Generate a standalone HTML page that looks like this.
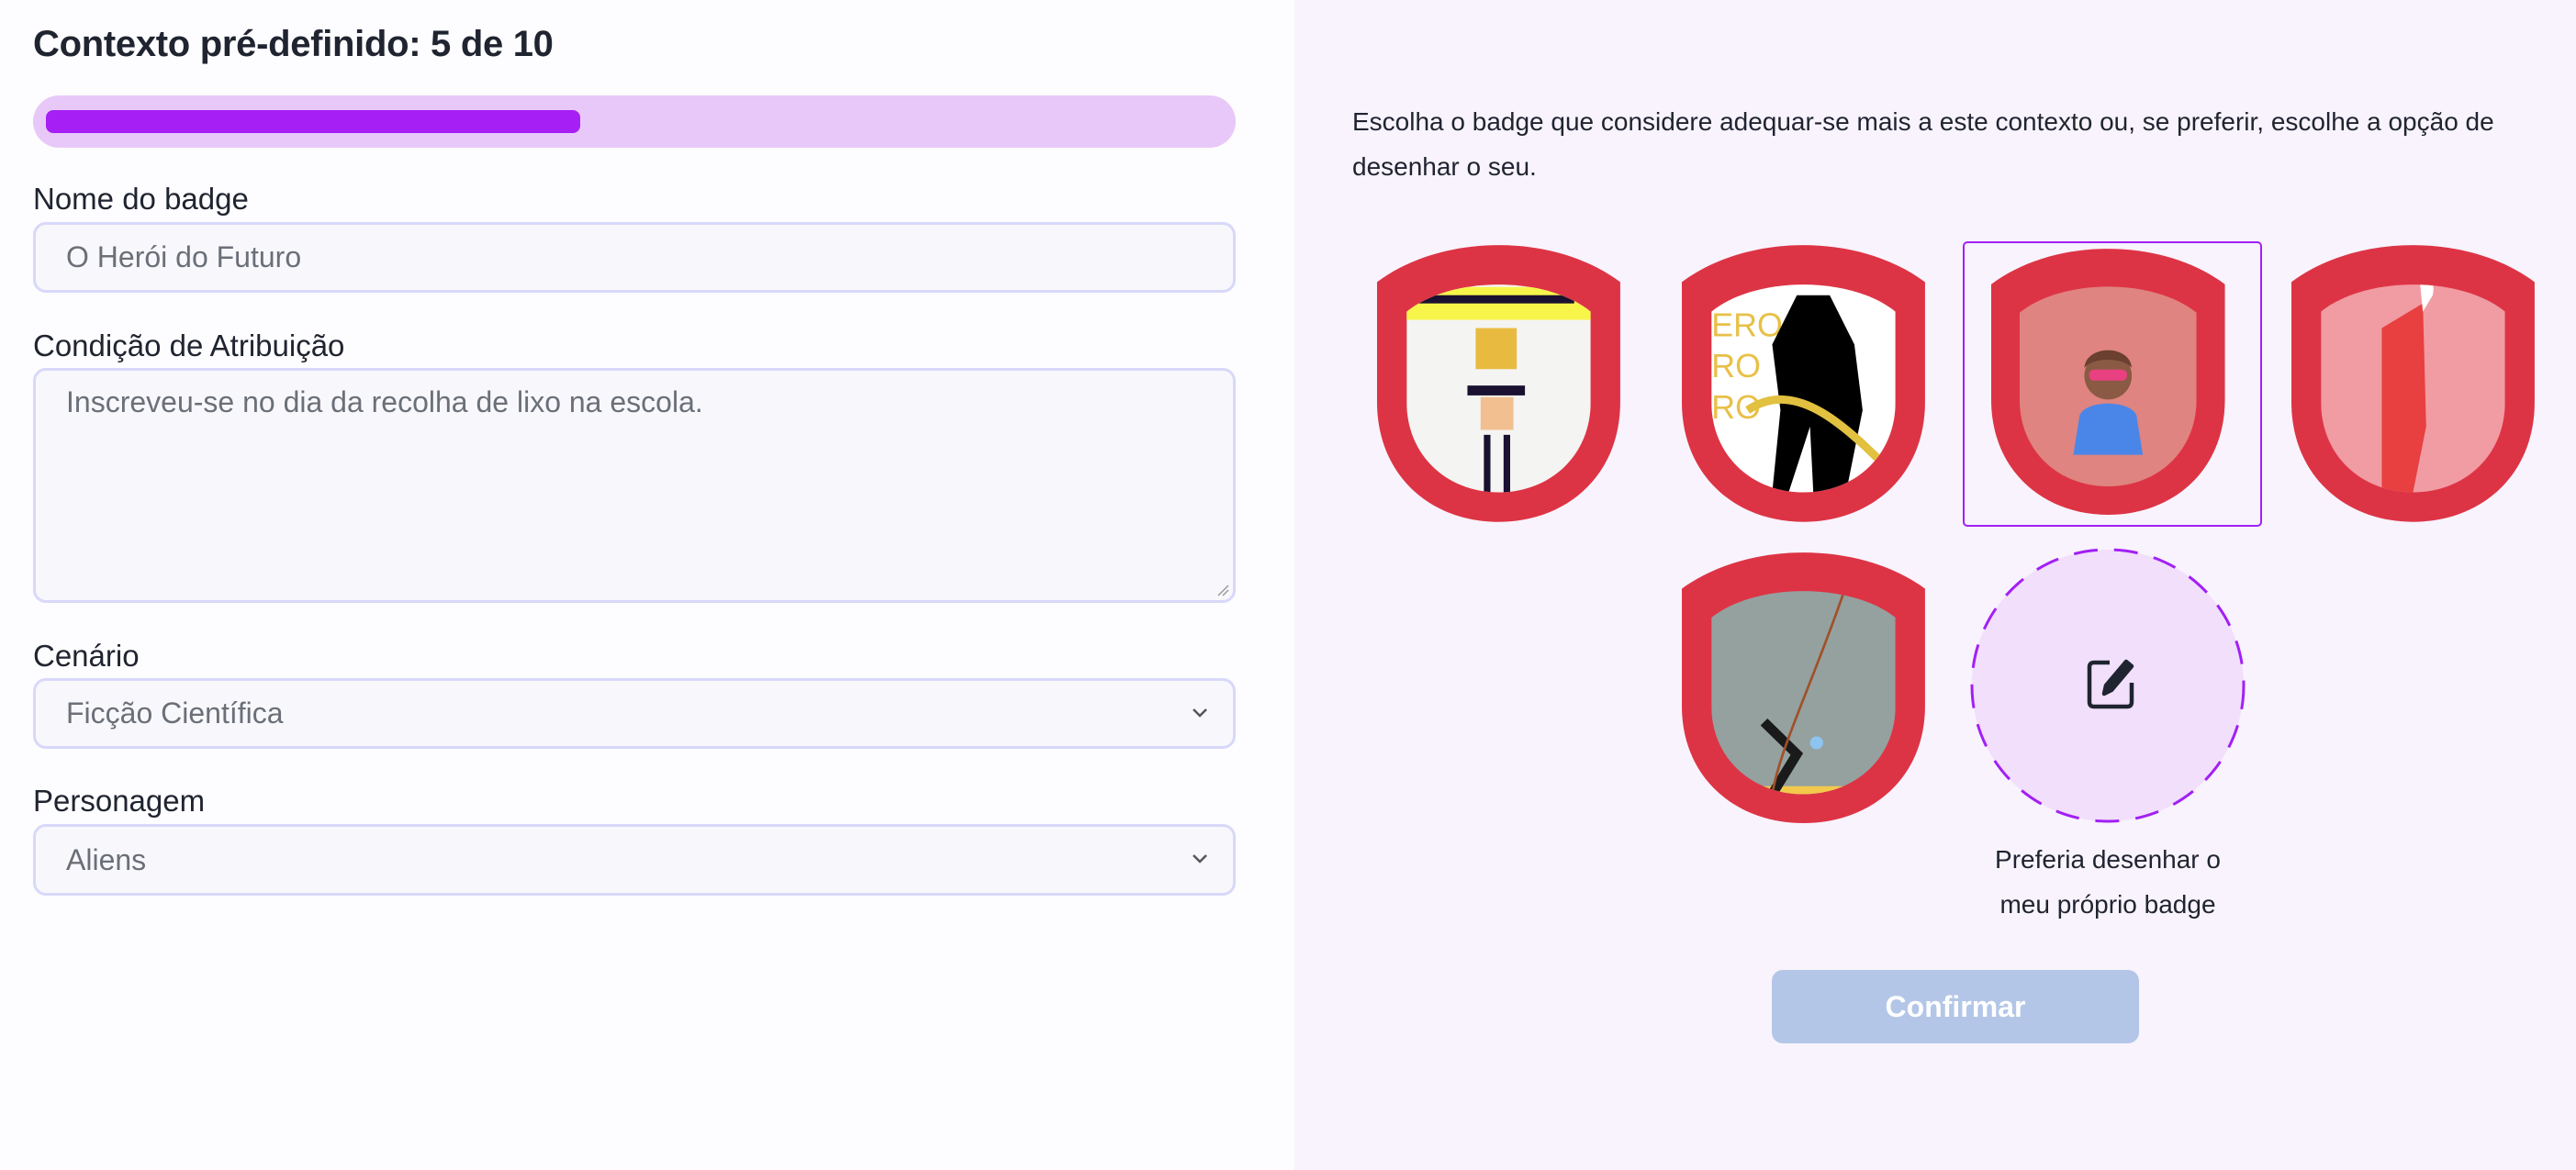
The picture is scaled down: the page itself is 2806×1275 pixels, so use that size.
<!DOCTYPE html>
<html><head><meta charset="utf-8">
<style>
*{box-sizing:border-box;margin:0;padding:0}
body{width:2806px;height:1275px;position:relative;font-family:"Liberation Sans",sans-serif;background:#fdfcfe;overflow:hidden;color:#1f2430}
.abs{position:absolute}
.right{left:1410px;top:0;width:1396px;height:1275px;background:#f8f3fd}
h1{position:absolute;left:36px;top:26px;font-size:40px;font-weight:bold;letter-spacing:-0.3px}
.bar{left:36px;top:104px;width:1310px;height:57px;border-radius:29px;background:#e8c8f8}
.fill{left:50px;top:120px;width:582px;height:25px;border-radius:8px;background:#a61ff4}
.lbl{position:absolute;left:36px;font-size:33px;color:#1f2430}
.inp{position:absolute;left:36px;width:1310px;border:3px solid #d8d8fa;border-radius:14px;background:#f8f8fc;font-size:32px;color:#6b6f78;padding-left:33px}
.chev{position:absolute;right:26px;top:50%;margin-top:-8px}
.txt{font-size:28px;color:#1f2430;line-height:49px}
</style></head><body>
<h1>Contexto pré-definido: 5 de 10</h1>
<div class="abs bar"></div><div class="abs fill"></div>

<div class="lbl" style="top:198px">Nome do badge</div>
<div class="inp" style="top:242px;height:77px;line-height:71px">O Herói do Futuro</div>

<div class="lbl" style="top:358px">Condição de Atribuição</div>
<div class="inp" style="top:401px;height:256px;padding-top:14px;line-height:40px">Inscreveu-se no dia da recolha de lixo na escola.
<svg class="abs" style="right:4px;bottom:4px" width="14" height="14"><path d="M2 13 L13 2 M7 13 L13 7" stroke="#999" stroke-width="1.5"/></svg></div>

<div class="lbl" style="top:696px">Cenário</div>
<div class="inp" style="top:739px;height:77px;line-height:71px">Ficção Científica<svg class="chev" width="20" height="14"><path d="M3 3 L10 10 L17 3" fill="none" stroke="#555" stroke-width="2.5"/></svg></div>

<div class="lbl" style="top:854px">Personagem</div>
<div class="inp" style="top:898px;height:78px;line-height:72px">Aliens<svg class="chev" width="20" height="14"><path d="M3 3 L10 10 L17 3" fill="none" stroke="#555" stroke-width="2.5"/></svg></div>

<div class="abs right"></div>
<div class="abs txt" style="left:1473px;top:108px;width:1300px">Escolha o badge que considere adequar-se mais a este contexto ou, se preferir, escolhe a opção de<br>desenhar o seu.</div>

<svg class="abs" style="left:0;top:0" width="2806" height="1275">
<defs>
<path id="outer" d="M0 22 C40 -8 108 -8 148 22 L148 95 C148 140 115 168 74 168 C33 168 0 140 0 95 Z"/>
<path id="inner" d="M18 40 C45 18 103 18 130 40 L130 95 C130 128 105 150 74 150 C43 150 18 128 18 95 Z"/>
<clipPath id="cp"><use href="#inner"/></clipPath>
</defs>
<g transform="translate(1500,268) scale(1.79)">
<use href="#outer" fill="#dd3445"/>
<g clip-path="url(#cp)"><rect width="148" height="168" fill="#f4f4f2"/><rect x="0" y="25" width="148" height="20" fill="#f7f54a"/><rect x="20" y="30" width="100" height="5" fill="#1a1030"/><rect x="60" y="50" width="25" height="25" fill="#e8bb40"/><rect x="55" y="85" width="35" height="6" fill="#1a1030"/><rect x="63" y="92" width="20" height="20" fill="#f2c090"/><rect x="65" y="115" width="4" height="35" fill="#1a1030"/><rect x="77" y="115" width="4" height="35" fill="#1a1030"/></g>
</g>
<g transform="translate(1832,268) scale(1.79)">
<use href="#outer" fill="#dd3445"/>
<g clip-path="url(#cp)"><rect width="148" height="168" fill="#ffffff"/><text x="18" y="55" font-size="20" fill="#e8c048" font-family="Liberation Sans">ERO</text><text x="18" y="80" font-size="20" fill="#e8c048" font-family="Liberation Sans">RO</text><text x="18" y="105" font-size="20" fill="#e8c048" font-family="Liberation Sans">RO</text><path d="M70 30 L90 30 L105 60 L110 100 L100 150 L80 150 L78 110 L65 150 L55 150 L60 100 L55 60 Z" fill="#000"/><path d="M40 100 C70 80 100 110 130 140" stroke="#e2c040" stroke-width="5" fill="none"/></g>
</g>
<rect x="2139" y="264" width="324" height="309" rx="4" fill="none" stroke="#a21ff5" stroke-width="2"/>
<g transform="translate(2169,272) scale(1.72)">
<use href="#outer" fill="#dd3445"/>
<g clip-path="url(#cp)"><rect width="148" height="168" fill="#df8480"/><path d="M52 130 L56 105 C60 95 88 95 92 105 L96 130 Z" fill="#4a86e8"/><circle cx="74" cy="80" r="15" fill="#8a5a44"/><path d="M59 75 C60 60 88 60 89 75 C84 68 64 68 59 75Z" fill="#6b4030"/><rect x="62" y="76" width="24" height="7" rx="3" fill="#e84080"/></g>
</g>
<g transform="translate(2496,268) scale(1.79)">
<use href="#outer" fill="#dd3445"/>
<g clip-path="url(#cp)"><rect width="148" height="168" fill="#f19ba3"/><path d="M55 50 L80 35 L82 110 L72 160 L55 160 Z" fill="#e84040"/><path d="M78 20 C82 15 88 20 86 30 L80 40 Z" fill="#fff"/></g>
</g>
<g transform="translate(1832,603) scale(1.79,1.75)">
<use href="#outer" fill="#dd3445"/>
<g clip-path="url(#cp)"><rect width="148" height="168" fill="#94a19f"/><rect x="0" y="145" width="148" height="20" fill="#f2c94c"/><path d="M50 105 L70 125 L55 150" stroke="#1a1a1a" stroke-width="6" fill="none"/><circle cx="82" cy="118" r="4" fill="#8ec4f0"/><path d="M100 20 C80 80 60 120 55 150" stroke="#a0502a" stroke-width="1.5" fill="none"/></g>
</g>
<ellipse cx="2296" cy="747" rx="148" ry="148" fill="#f2dffb" stroke="#a21ff5" stroke-width="3" stroke-dasharray="26 18"/>
<g transform="translate(2272,718)" fill="none" stroke="#1f2430" stroke-width="4.5" stroke-linejoin="round">
<path d="M26 4 H9 Q4 4 4 9 V47 Q4 52 9 52 H45 Q50 52 50 47 V26"/>
<path d="M20 38 L22 29 L44 3 L50 8 L28 34 Z" fill="#1f2430"/>
</g>
</svg>

<div class="abs txt" style="left:2096px;top:912px;width:400px;text-align:center">Preferia desenhar o<br>meu próprio badge</div>
<div class="abs" style="left:1930px;top:1057px;width:400px;height:80px;border-radius:12px;background:#b3c6e7;color:#fff;font-size:32px;font-weight:bold;text-align:center;line-height:80px">Confirmar</div>
</body></html>
